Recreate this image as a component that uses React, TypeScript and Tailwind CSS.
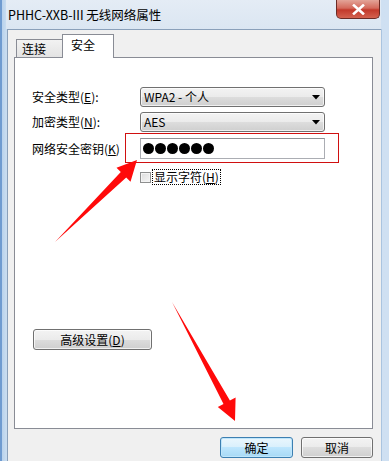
import React from "react";

const F = "font-['Noto_Sans_CJK_SC','Noto_Sans',sans-serif]";

function Combo({ text }: { text: string }) {
  return (
    <div className="w-[185px] h-[20px] rounded-[3px] border border-[#707070] bg-[linear-gradient(to_bottom,#f3f3f3_0%,#ebebeb_50%,#dddddd_50%,#cfcfcf_100%)] flex items-center justify-between pl-[3px] pr-[4px] shadow-[inset_0_0_0_1px_rgba(255,255,255,0.7)]">
      <span className="text-[12px] leading-[14px] text-black">{text}</span>
      <svg width="8" height="5" viewBox="0 0 8 5">
        <polygon points="0,0 8,0 4,4.5" fill="#000" />
      </svg>
    </div>
  );
}

function Label({ children }: { children: React.ReactNode }) {
  return <div className="w-[108px] text-[12px] leading-[14px] text-black">{children}</div>;
}

export default function App() {
  return (
    <div className={`${F} relative w-[389px] h-[461px] overflow-hidden flex flex-col bg-[linear-gradient(to_right,#6f9bd0_0px,#6f9bd0_2px,#b9d2ec_2px,#c8dcf0_6px,#cfe0f2_100%)]`}>
      {/* title bar */}
      <div className="h-[29px] flex justify-between bg-[linear-gradient(to_bottom,#e4ecf5,#dbe6f2)] ml-[6px] mr-[8px]">
        <div className="pl-[2px] pt-[7px] text-[12.5px] leading-[16px] text-black">PHHC-XXB-III 无线网络属性</div>
        <div className="self-start w-[44px] h-[19px] mr-[1px] rounded-b-[5px] border border-t-0 border-[#6b2b25] bg-[linear-gradient(to_bottom,#e3a498_0%,#d46a5c_45%,#c2392b_55%,#d3624f_100%)] flex items-center justify-center">
          <svg width="13" height="11" viewBox="0 0 13 11">
            <path d="M2 1.5 L11 9.5 M11 1.5 L2 9.5" stroke="#ffffff" strokeWidth="2.6" strokeLinecap="square" />
          </svg>
        </div>
      </div>
      {/* client */}
      <div className="flex-1 ml-[7px] bg-[#f0f0f0] border-l border-t border-[#8aa0ba] flex flex-col shadow-[1px_0_0_#aac4e0]" style={{ width: 374 }}>
        <div className="relative z-10 h-[24px] mt-[4px] ml-[8px] flex items-end">
          <div className="w-[47px] h-[18px] mb-[1px] border border-b-0 border-[#898c95] bg-[linear-gradient(to_bottom,#f2f2f2,#e3e3e3)] flex items-end pb-[1px] pl-[5px] text-[12px] leading-[14px] text-black">
            连接
          </div>
          <div className="-ml-px w-[52px] h-[24px] border border-b-0 border-[#898c95] bg-white flex items-start pt-[3px] pl-[8px] text-[12px] leading-[14px] text-black">
            安全
          </div>
        </div>
        <div className="-mt-px ml-[6px] w-[359px] h-[372px] border border-[#898c95] bg-white flex flex-col pl-[17px] pt-[29px]">
          <div className="flex items-center">
            <Label>安全类型(<u>E</u>):</Label>
            <Combo text="WPA2 - 个人" />
          </div>
          <div className="flex items-center mt-[5px]">
            <Label>加密类型(<u>N</u>):</Label>
            <Combo text="AES" />
          </div>
          <div className="flex items-center mt-[6px]">
            <Label>网络安全密钥(<u>K</u>)</Label>
            <div className="w-[185px] h-[21px] border border-[#abadb3] border-t-[#8e9297] bg-white flex items-center gap-[1px] pl-[2px]">
              {[0, 1, 2, 3, 4, 5].map((i) => (
                <span key={i} className="w-[11px] h-[11px] rounded-full bg-black" />
              ))}
            </div>
          </div>
          <div className="flex items-center mt-[10px] ml-[108px] h-[16px]">
            <div className="w-[11px] h-[11px] border border-[#8e8f8f] bg-[linear-gradient(135deg,#dcdcdc,#f6f6f6)] shadow-[inset_0_0_0_1px_#f4f4f4]" />
            <div className="ml-[2px] px-[1px] outline outline-1 outline-dotted outline-black text-[12px] leading-[14px] text-black">
              显示字符(<u>H</u>)
            </div>
          </div>
          <div className="mt-[144px] ml-[1px] w-[119px] h-[21px] rounded-[3px] border border-[#707070] bg-[linear-gradient(to_bottom,#f3f3f3_0%,#ebebeb_50%,#dddddd_50%,#cfcfcf_100%)] shadow-[inset_0_0_0_1px_rgba(255,255,255,0.7)] flex items-center justify-center text-[12px] leading-[14px] text-black">
            高级设置(<u>D</u>)
          </div>
        </div>
        <div className="mt-[8px] flex justify-end gap-[8px] pr-[8px]">
          <div className="w-[73px] h-[21px] rounded-[3px] border border-[#3c7fb1] bg-[linear-gradient(to_bottom,#eaf6fd_0%,#d9f0fc_50%,#bee6fd_50%,#a7d9f5_100%)] shadow-[inset_0_0_0_1px_#bfe6fb] flex items-center justify-center text-[12px] leading-[14px] text-black">
            确定
          </div>
          <div className="w-[72px] h-[21px] rounded-[3px] border border-[#707070] bg-[linear-gradient(to_bottom,#f3f3f3_0%,#ebebeb_50%,#dddddd_50%,#cfcfcf_100%)] shadow-[inset_0_0_0_1px_rgba(255,255,255,0.7)] flex items-center justify-center text-[12px] leading-[14px] text-black">
            取消
          </div>
        </div>
      </div>
      {/* annotations */}
      <div className="absolute left-[125px] top-[133px] w-[214px] h-[30px] border border-[#d01010] pointer-events-none" />
      <svg className="absolute left-0 top-0 pointer-events-none" width="389" height="461" viewBox="0 0 389 461">
        <polygon points="55,242 120.8,172 116.5,167.7 137,160 130.5,181.7 126.2,177.4" fill="#ff0a0a" />
        <polygon points="172,302 223.5,404 217.8,407 235,421 235.6,397.6 229.9,400.6" fill="#ff0a0a" />
      </svg>
    </div>
  );
}
